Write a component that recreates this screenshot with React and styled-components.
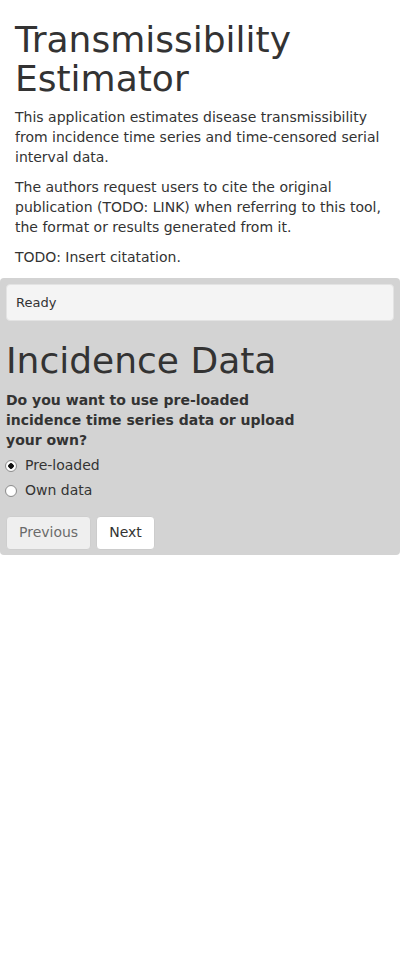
import React, { useState } from 'react';
import styled, { createGlobalStyle } from 'styled-components';

const GlobalStyle = createGlobalStyle`
* {
box-sizing: border-box;
}
body {
margin: 0;
font-family: "DejaVu Sans", "Liberation Sans", sans-serif;
font-size: 14px;
line-height: 1.42857;
color: #333;
background-color: #fff;
}
`

const options = [
  { value: 'preloaded', label: 'Pre-loaded' },
  { value: 'own', label: 'Own data' },
];

const App = () => {
  const [source, setSource] = useState('preloaded');

  return (
    <>
      <GlobalStyle />
      <Header>
        <Title>Transmissibility Estimator</Title>
        <Paragraph>
          This application estimates disease transmissibility from incidence time series and
          time-censored serial interval data.
        </Paragraph>
        <Paragraph>
          The authors request users to cite the original publication (TODO: LINK) when referring
          to this tool, the format or results generated from it.
        </Paragraph>
        <Paragraph>TODO: Insert citatation.</Paragraph>
      </Header>

      <Panel>
        <StatusBox>Ready</StatusBox>
        <Title $spaced>Incidence Data</Title>
        <Field>
          <FieldLabel>
            Do you want to use pre-loaded incidence time series data or upload your own?
          </FieldLabel>
          <OptionGroup>
            {options.map((opt) => (
              <RadioOption key={opt.value}>
                <Radio
                  type="radio"
                  name="incidenceSource"
                  value={opt.value}
                  checked={source === opt.value}
                  onChange={() => setSource(opt.value)}
                />
                <span>{opt.label}</span>
              </RadioOption>
            ))}
          </OptionGroup>
        </Field>
        <ButtonRow>
          <Button disabled>Previous</Button>
          <Button>Next</Button>
        </ButtonRow>
      </Panel>
    </>
  );
};

const Header = styled.div`
padding: 0 15px;
`
const Title = styled.h1`
margin: 20px 0 ${props => (props.$spaced ? '11px' : '10px')};
font-size: 36px;
font-weight: 400;
line-height: 39px;
color: #333;
`
const Paragraph = styled.p`
margin: 0 0 10px;
`
const Panel = styled.div`
display: flex;
flex-direction: column;
padding: 6px 6px 5px;
background-color: #d3d3d3;
border-radius: 4px;
`
const StatusBox = styled.div`
padding: 9px;
font-size: 13px;
line-height: 17px;
background-color: #f4f4f4;
border: 1px solid #e3e3e3;
border-radius: 4px;
`
const Field = styled.div`
display: flex;
flex-direction: column;
width: 300px;
max-width: 100%;
`
const FieldLabel = styled.label`
margin-bottom: 5px;
font-weight: 700;
`
const OptionGroup = styled.div`
display: flex;
flex-direction: column;
gap: 5px;
`
const RadioOption = styled.label`
display: flex;
align-items: center;
height: 20px;
cursor: pointer;
`
const Radio = styled.input`
appearance: none;
width: 12px;
height: 12px;
margin: 0 8px 0 -1px;
border: 1px solid #8e8e8e;
border-radius: 50%;
background: radial-gradient(circle, #fff 55%, #e6e6e6 100%);

&:checked {
background: radial-gradient(circle, #111 0 2.5px, #fff 3px 55%, #e6e6e6 100%);
}
`
const ButtonRow = styled.div`
display: flex;
gap: 5px;
margin-top: 15px;
`
const Button = styled.button`
padding: 6px 12px;
font-family: inherit;
font-size: 14px;
line-height: 1.42857;
color: #333;
background-color: #fff;
border: 1px solid #ccc;
border-radius: 4px;
cursor: pointer;

&:disabled {
opacity: 0.65;
cursor: not-allowed;
}
`

export default App
